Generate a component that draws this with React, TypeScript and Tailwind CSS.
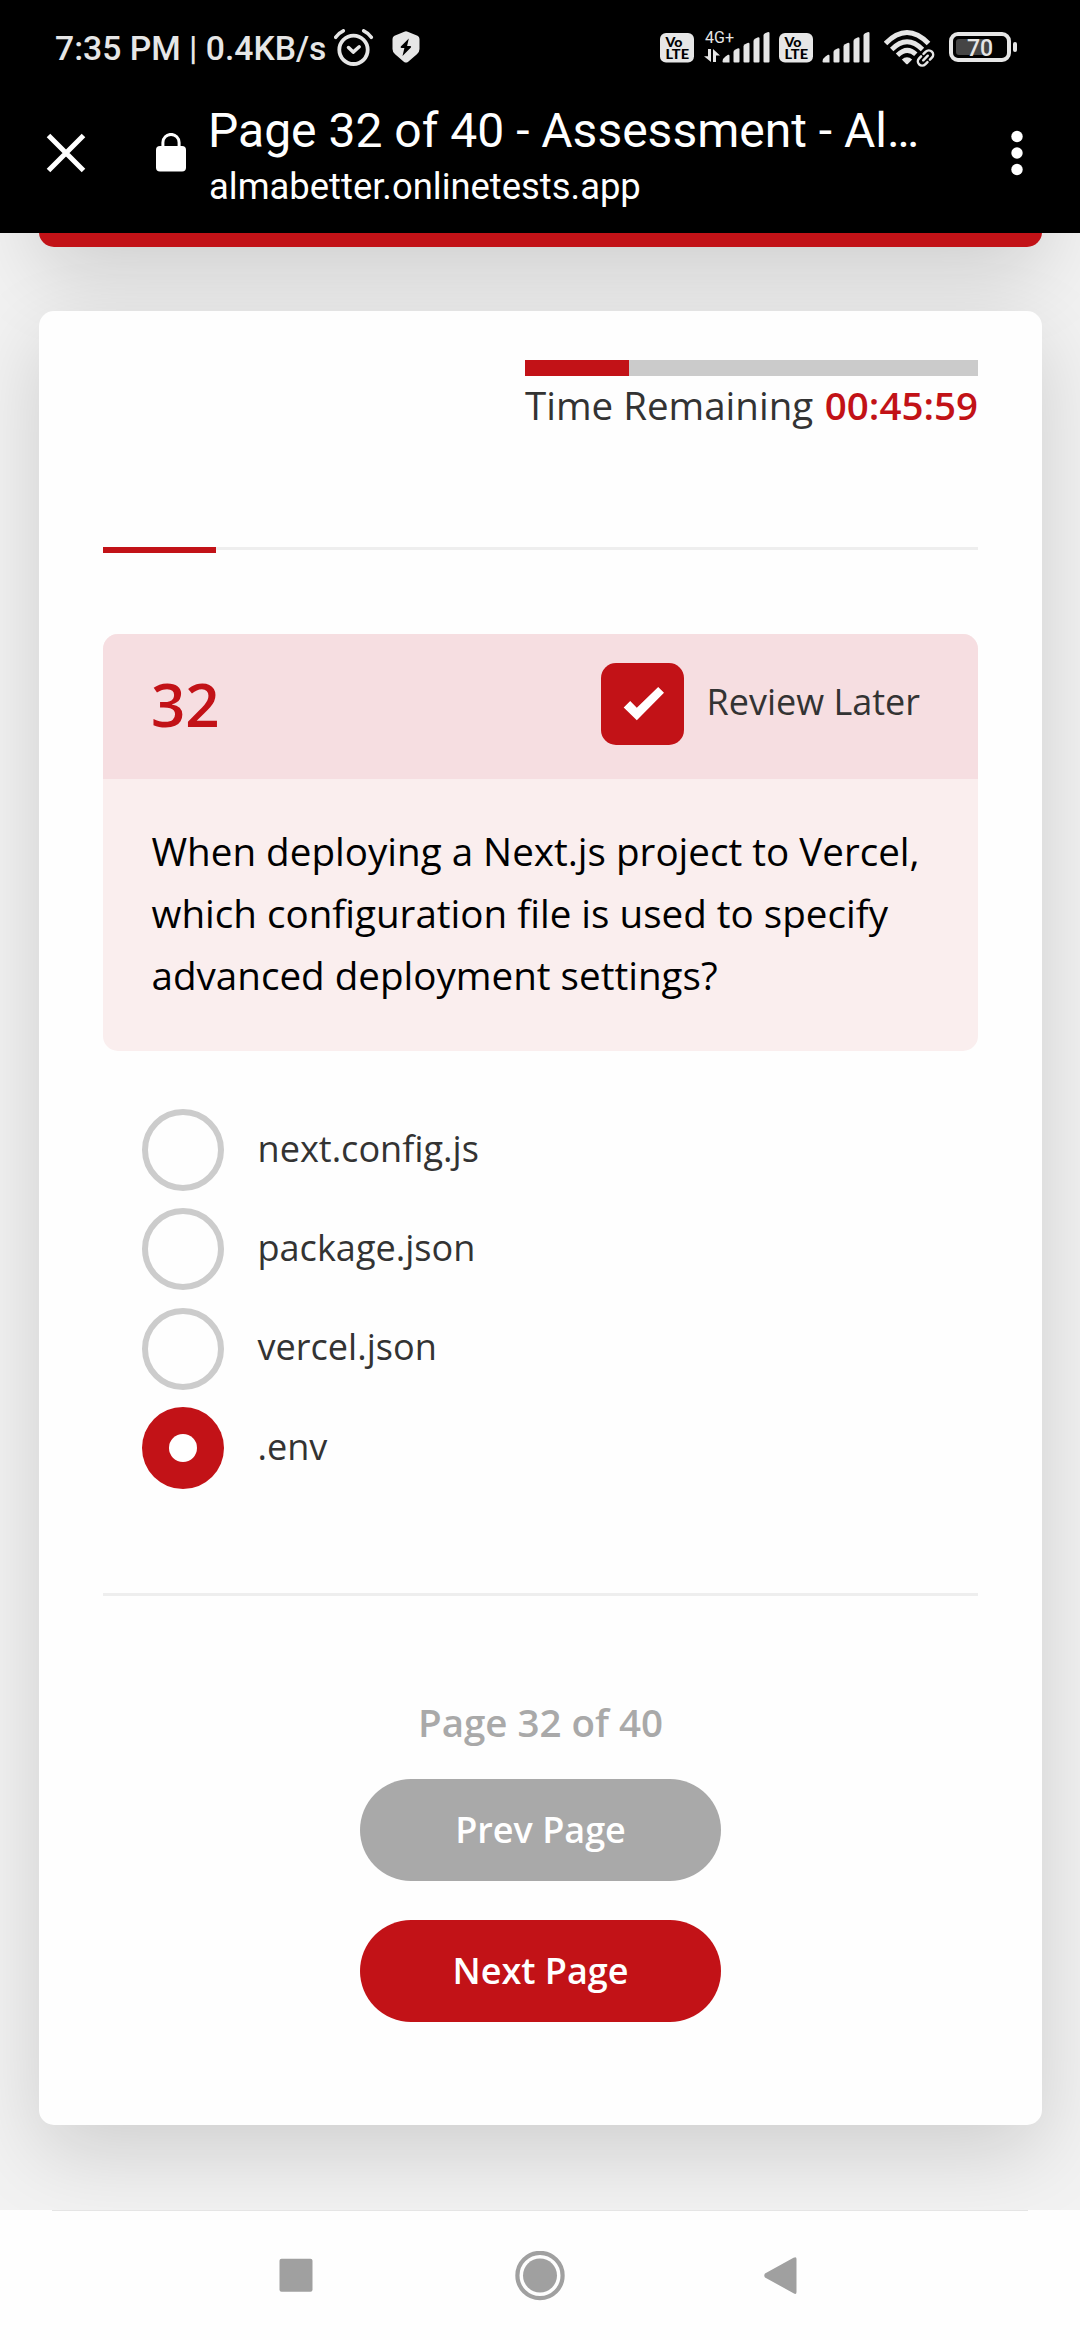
import React from "react";

const options = [
  { label: "next.config.js", selected: false },
  { label: "package.json", selected: false },
  { label: "vercel.json", selected: false },
  { label: ".env", selected: true },
];

function VoLte() {
  return (
    <svg className="h-[30px] w-[34px] shrink-0" viewBox="0 0 34 30">
      <rect width="34" height="29.5" rx="6" fill="#e6e6e6" />
      <g fill="#000" fontFamily="Lato, sans-serif" fontWeight="900">
        <text x="5.5" y="13.6" fontSize="13.5" textLength="17" lengthAdjust="spacingAndGlyphs">Vo</text>
        <text x="5.5" y="26" fontSize="13" textLength="23.5" lengthAdjust="spacingAndGlyphs">LTE</text>
      </g>
    </svg>
  );
}

function Bars() {
  return (
    <svg className="h-[31px] w-[48px] shrink-0" viewBox="0 0 48 31" fill="#e6e6e6">
      <path d="M.5 29.500q0-3 3-5l2.500-1.700q1.500-.4 1.500 1v6.700H1.500q-1 0-1-1z" />
      <path d="M11.500 20q0-1.500 1.500-2.300l2.500-1.200q2-.7 2 1V29.500q0 1-1 1h-4q-1 0-1-1z" />
      <path d="M21.500 14.500q0-1.500 1.500-2.300l2.500-1.200q2-.7 2 1V29.500q0 1-1 1h-4q-1 0-1-1z" />
      <path d="M31.500 9q0-1.500 1.500-2.300l2.500-1.200q2-.7 2 1V29.500q0 1-1 1h-4q-1 0-1-1z" />
      <path d="M41.500 3.500q0-1.500 1.500-2.300L45.500.2q2-.5 2 1V29.500q0 1-1 1h-4q-1 0-1-1z" />
    </svg>
  );
}

function AlarmIcon() {
  return (
    <svg className="ml-[9px] mt-[29px] h-[37px] w-[40px] shrink-0" viewBox="0 0 40 37" fill="none" stroke="#e6e6e6">
      <circle cx="19.500" cy="20.800" r="14.200" strokeWidth="3.800" />
      <path d="M14.500 18.500l4.700 4.600 6-5.300" strokeWidth="3.500" strokeLinecap="round" strokeLinejoin="round" />
      <path d="M1.700 8.300Q4.500 4 9.300 1.800M37.300 8.300Q34.500 4 29.700 1.800" strokeWidth="3.500" strokeLinecap="round" />
    </svg>
  );
}

function ShieldIcon() {
  return (
    <svg className="ml-[18px] mt-[31px] h-[32px] w-[28px] shrink-0" viewBox="0 0 28 32">
      <path d="M12.300.8Q14-.2 15.700.8L25.500 4.800Q27.500 5.600 27.500 8v10q0 3-2.600 5.300l-9 7.600q-1.900 1.200-3.800 0l-9-7.600Q.5 21 .5 18V8q0-2.400 2-3.200z" fill="#e6e6e6" />
      <path d="M16.800 7.500L8.800 15.500q-.7 1.300.7 1.600h2.900l-1.900 7.800 8.400-8.300q.8-1.400-.7-1.700h-3.100z" fill="#000" />
    </svg>
  );
}

function WifiIcon() {
  return (
    <svg className="h-[37px] w-[52px] shrink-0" viewBox="0 0 52 37" fill="none" stroke="#e6e6e6">
      <path d="M1.500 13.500Q23 -8.500 44.500 13.500" strokeWidth="5" />
      <path d="M7.700 19.500Q23 4 38.500 19.500" strokeWidth="4.800" />
      <path d="M13.500 25.300Q23 16 31.800 24.300" strokeWidth="4.800" />
      <path d="M17.800 29.600Q23 24.800 28.200 29.600L23.800 34q-.8.700-1.600 0z" fill="#e6e6e6" stroke="none" />
      <g transform="rotate(-45 41.500 28)" strokeWidth="2.500" strokeLinecap="round">
        <path d="M39.500 23.700h-2.700a4.300 4.300 0 0 0 0 8.600h3.200M43.500 32.300h2.700a4.300 4.300 0 0 0 0-8.600H43M38.300 28h6.400" />
      </g>
    </svg>
  );
}

function StatusBar() {
  return (
    <div className="flex h-[75px] items-start">
      <span className="ml-[55px] mt-[29px] w-[270px] whitespace-nowrap text-[33.700px] font-medium leading-[40px] text-[#e6e6e6]">
        7:35 PM | 0.4KB/s
      </span>
      <AlarmIcon />
      <ShieldIcon />
      <div className="ml-auto mr-[62px] mt-[32px] flex">
        <div className="mt-px"><VoLte /></div>
        <div className="ml-[10px] h-[31px] w-[18px] overflow-visible">
          <div className="h-[17px] whitespace-nowrap pl-px text-[16px] leading-[12px] text-[#e6e6e6]">4G+</div>
          <svg className="h-[14px] w-[16px]" viewBox="0 0 16 14" fill="#e6e6e6">
            <path d="M4 0h3v13L0 7.300h4zM9 13V0l7 6.500h-4V13z" />
          </svg>
        </div>
        <Bars />
        <div className="ml-[9px] mt-px"><VoLte /></div>
        <div className="ml-[9px]"><Bars /></div>
        <div className="-mt-[2px] ml-[14px]"><WifiIcon /></div>
        <svg className="ml-[13px] h-[31px] w-[69px] shrink-0" viewBox="0 0 69 31">
          <rect x="2" y="2" width="58" height="26" rx="7" fill="none" stroke="#e6e6e6" strokeWidth="4" />
          <rect x="7" y="7" width="34" height="16" rx="3" fill="#454545" />
          <rect x="64" y="10" width="4" height="10" rx="2" fill="#e6e6e6" />
          <text x="31" y="23.700" textAnchor="middle" fill="#e6e6e6" fontSize="23" fontWeight="500" fontFamily="Roboto, sans-serif">70</text>
        </svg>
      </div>
    </div>
  );
}

function BrowserBar() {
  return (
    <div className="flex h-[158px] items-start text-white">
      <svg className="ml-[46px] mt-[58px] h-[40px] w-[40px] shrink-0" viewBox="0 0 40 40" stroke="#fff" strokeWidth="5" fill="none">
        <path d="M2.500 2.500l35 35M37.500 2.500l-35 35" />
      </svg>
      <svg className="ml-[70px] mt-[58px] h-[39px] w-[30px] shrink-0" viewBox="0 0 30 39">
        <rect y="13" width="30" height="25.500" rx="4" fill="#fff" />
        <path d="M6.900 15V9.500a8.100 8.100 0 0 1 16.200 0V15" fill="none" stroke="#fff" strokeWidth="3" />
      </svg>
      <div className="ml-[22px] mt-[26px] w-[730px] whitespace-nowrap">
        <div className="text-[48px] leading-[60px]">Page 32 of 40 - Assessment - Al…</div>
        <div className="mt-[4px] pl-px text-[36.400px] leading-[44px]">almabetter.onlinetests.app</div>
      </div>
      <svg className="ml-[72px] mt-[55px] h-[46px] w-[14px] shrink-0" viewBox="0 0 14 46" fill="#fff">
        <circle cx="7" cy="6.500" r="5.700" />
        <circle cx="7" cy="23" r="5.700" />
        <circle cx="7" cy="39.500" r="5.700" />
      </svg>
    </div>
  );
}

function Question() {
  return (
    <section className="mt-[81px] overflow-hidden rounded-[15px] bg-[#faeeee]">
      <div className="flex h-[145px] items-start bg-[#f6dee1]">
        <span className="ml-[48px] mt-[40px] text-[60px] font-semibold leading-[60px] text-[#c21217]">32</span>
        <div className="ml-auto mr-[58px] mt-[29px] flex">
          <div className="flex h-[82px] w-[83px] rounded-[15px] bg-[#c21217]">
            <svg className="h-[82px] w-[83px]" viewBox="0 0 83 82">
              <path d="M22.700 44.500l6.500-6.500 6.600 6.700L57.200 24l5.800 5.700-27.200 27.600z" fill="#fff" />
            </svg>
          </div>
          <span className="ml-[22px] mt-[15px] whitespace-nowrap text-[36px] leading-[48px] text-[#333]">Review Later</span>
        </div>
      </div>
      <p className="h-[272px] whitespace-nowrap pl-[48.500px] pt-[41px] text-[38.600px] leading-[62px] text-black">
        When deploying a Next.js project to Vercel,
        <br />
        which configuration file is used to specify
        <br />
        advanced deployment settings?
      </p>
    </section>
  );
}

function Options() {
  return (
    <div className="ml-[39px] mt-[58px] flex flex-col">
      {options.map((o) => (
        <div key={o.label} className="flex h-[99.400px] items-start">
          {o.selected ? (
            <span className="flex size-[82px] items-center justify-center rounded-full bg-[#c21217]">
              <span className="size-[28px] rounded-full bg-white" />
            </span>
          ) : (
            <span className="size-[82px] rounded-full border-[6px] border-[#ccc]" />
          )}
          <span className="ml-[33.500px] mt-[14.500px] text-[36.100px] leading-[48px] text-[#333]">{o.label}</span>
        </div>
      ))}
    </div>
  );
}

export default function App() {
  return (
    <div className="flex h-[2340px] w-[1080px] flex-col overflow-hidden bg-[#f2f2f2] font-['Open_Sans',sans-serif]">
      <header className="z-10 h-[233px] shrink-0 bg-black font-[Roboto,sans-serif]">
        <StatusBar />
        <BrowserBar />
      </header>
      <main className="flex h-[1977px] shrink-0 flex-col overflow-hidden">
        <div className="-mt-[206px] ml-[39px] mr-[38px] h-[220px] shrink-0 rounded-b-[15px] bg-[#c21217] shadow-[0_27px_82px_rgba(0,0,0,0.15)]" />
        <div className="ml-[39px] mr-[38px] mt-[64px] h-[1814px] shrink-0 rounded-[15px] bg-[#fefefe] px-[64px] pt-[49px] shadow-[0_27px_82px_rgba(0,0,0,0.15)]">
          <div className="ml-auto w-[453px]">
            <div className="h-[16px] bg-[#cbcbcb]">
              <div className="h-full w-[104px] bg-[#c21217]" />
            </div>
            <div className="mt-[7px] flex justify-between whitespace-nowrap text-[38.500px] leading-[44px] text-[#333]">
              <span>Time Remaining</span>
              <span className="font-semibold text-[#c21217]">00:45:59</span>
            </div>
          </div>
          <div className="mt-[120px] h-[6px]">
            <div className="h-[3px] bg-[#eee]">
              <div className="h-[6px] w-[113px] bg-[#c21217]" />
            </div>
          </div>
          <Question />
          <Options />
          <div className="mt-[86px] h-[3px] bg-[#eee]" />
          <div className="flex flex-col items-center font-semibold">
            <span className="mt-[102px] text-[38.500px] leading-[48px] text-[#a9a9a9]">Page 32 of 40</span>
            <button className="mt-[33px] h-[102px] w-[361px] rounded-full bg-[#a9a9a9] text-[36px] text-white">Prev Page</button>
            <button className="mt-[39px] h-[102px] w-[361px] rounded-full bg-[#c21217] text-[36px] text-white">Next Page</button>
          </div>
        </div>
      </main>
      <nav className="h-[130px] bg-[#fefefe]">
        <div className="mx-[52px] h-px bg-[#e5e5e5]" />
        <div className="flex pt-[40px]">
          <svg className="ml-[279px] h-[50px] w-[34px]" viewBox="0 0 34 50">
            <rect x="0.500" y="7.700" width="33" height="33" rx="2" fill="#a0a0a0" />
          </svg>
          <svg className="ml-[202px] h-[50px] w-[50px]" viewBox="0 0 50 50">
            <circle cx="25" cy="24.500" r="22.600" fill="none" stroke="#a0a0a0" strokeWidth="4.200" />
            <circle cx="25" cy="24.500" r="17" fill="#a0a0a0" />
          </svg>
          <svg className="ml-[199px] h-[50px] w-[34px]" viewBox="0 0 34 50">
            <path d="M1 22.500L29.500 6.800Q32.500 5 32.500 8v33q0 3-3 1.200L1 26.500q-1.500-2 0-4z" fill="#a0a0a0" />
          </svg>
        </div>
      </nav>
    </div>
  );
}
